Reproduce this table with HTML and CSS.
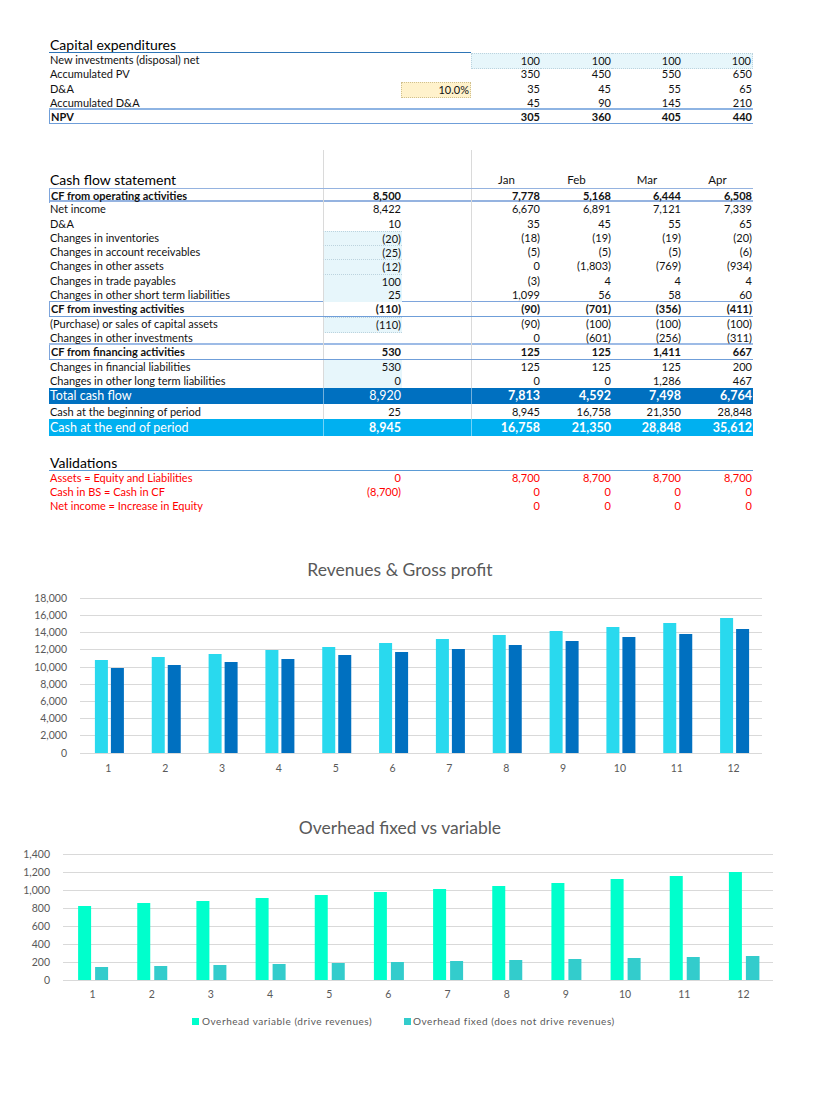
FILE: index.html
```html
<!DOCTYPE html>
<html lang="en">
<head>
<meta charset="utf-8">
<title>Financial model</title>
<link rel="stylesheet" href="styles.css">
</head>
<body>
<div class="page">
  <section class="capex">
    <div class="r trow"><div class="l title uline3">Capital expenditures</div></div>
    <div class="r"><div class="l">New investments (disposal) net</div><div></div><div></div><div class="mi mi-first">100</div><div class="mi">100</div><div class="mi">100</div><div class="mi mi-last">100</div></div>
    <div class="r"><div class="l">Accumulated PV</div><div></div><div></div><div>350</div><div>450</div><div>550</div><div>650</div></div>
    <div class="r"><div class="l">D&amp;A</div><div></div><div class="pct">10.0%</div><div>35</div><div>45</div><div>55</div><div>65</div></div>
    <div class="r accda"><div class="l">Accumulated D&amp;A</div><div></div><div></div><div>45</div><div>90</div><div>145</div><div>210</div></div>
    <div class="r npv bold"><div class="l">NPV</div><div></div><div></div><div>305</div><div>360</div><div>405</div><div>440</div></div>
  </section>

  <section class="cf">
    <div class="r spacer"><div></div><div></div><div></div><div></div><div></div><div></div><div></div></div>
    <div class="r trow"><div class="l title">Cash flow statement</div><div></div><div></div><div class="mh">Jan</div><div class="mh">Feb</div><div class="mh">Mar</div><div class="mh">Apr</div></div>
    <div class="r bold op"><div class="l">CF from operating activities</div><div>8,500</div><div></div><div>7,778</div><div>5,168</div><div>6,444</div><div>6,508</div></div>
    <div class="r"><div class="l">Net income</div><div>8,422</div><div></div><div>6,670</div><div>6,891</div><div>7,121</div><div>7,339</div></div>
    <div class="r"><div class="l">D&amp;A</div><div>10</div><div></div><div>35</div><div>45</div><div>55</div><div>65</div></div>
    <div class="r"><div class="l">Changes in inventories</div><div class="in dot">(20)</div><div></div><div>(18)</div><div>(19)</div><div>(19)</div><div>(20)</div></div>
    <div class="r"><div class="l">Changes in account receivables</div><div class="in dot">(25)</div><div></div><div>(5)</div><div>(5)</div><div>(5)</div><div>(6)</div></div>
    <div class="r"><div class="l">Changes in other assets</div><div class="in dot">(12)</div><div></div><div>0</div><div>(1,803)</div><div>(769)</div><div>(934)</div></div>
    <div class="r"><div class="l">Changes in trade payables</div><div class="in dot dotb">100</div><div></div><div>(3)</div><div>4</div><div>4</div><div>4</div></div>
    <div class="r ostl"><div class="l">Changes in other short term liabilities</div><div class="in">25</div><div></div><div>1,099</div><div>56</div><div>58</div><div>60</div></div>
    <div class="r bold sub"><div class="l">CF from investing activities</div><div>(110)</div><div></div><div>(90)</div><div>(701)</div><div>(356)</div><div>(411)</div></div>
    <div class="r"><div class="l">(Purchase) or sales of capital assets</div><div class="in dot dotb">(110)</div><div></div><div>(90)</div><div>(100)</div><div>(100)</div><div>(100)</div></div>
    <div class="r oi"><div class="l">Changes in other investments</div><div></div><div></div><div>0</div><div>(601)</div><div>(256)</div><div>(311)</div></div>
    <div class="r bold sub"><div class="l">CF from financing activities</div><div>530</div><div></div><div>125</div><div>125</div><div>1,411</div><div>667</div></div>
    <div class="r"><div class="l">Changes in financial liabilities</div><div class="in">530</div><div></div><div>125</div><div>125</div><div>125</div><div>200</div></div>
    <div class="r"><div class="l">Changes in other long term liabilities</div><div class="in">0</div><div></div><div>0</div><div>0</div><div>1,286</div><div>467</div></div>
    <div class="r total"><div class="l">Total cash flow</div><div>8,920</div><div></div><div class="sb">7,813</div><div class="sb">4,592</div><div class="sb">7,498</div><div class="sb">6,764</div></div>
    <div class="r begin"><div class="l">Cash at the beginning of period</div><div>25</div><div></div><div>8,945</div><div>16,758</div><div>21,350</div><div>28,848</div></div>
    <div class="r cashend"><div class="l">Cash at the end of period</div><div>8,945</div><div></div><div>16,758</div><div>21,350</div><div>28,848</div><div>35,612</div></div>
  </section>

  <section class="val">
    <div class="r trow"><div class="l title uline-full">Validations</div></div>
    <div class="r vr"><div class="l">Assets = Equity and Liabilities</div><div>0</div><div></div><div>8,700</div><div>8,700</div><div>8,700</div><div>8,700</div></div>
    <div class="r vr"><div class="l">Cash in BS = Cash in CF</div><div>(8,700)</div><div></div><div>0</div><div>0</div><div>0</div><div>0</div></div>
    <div class="r vr"><div class="l">Net income = Increase in Equity</div><div></div><div></div><div>0</div><div>0</div><div>0</div><div>0</div></div>
  </section>
</div>

<svg class="chart chart1" viewBox="0 555 816 225" width="816" height="225" aria-label="Revenues &amp; Gross profit chart">
  <text class="ctitle" x="400" y="576" text-anchor="middle">Revenues &amp; Gross profit</text>
  <g class="grid">
    <line x1="80" x2="762" y1="598.5" y2="598.5"/>
    <line x1="80" x2="762" y1="615.5" y2="615.5"/>
    <line x1="80" x2="762" y1="632.5" y2="632.5"/>
    <line x1="80" x2="762" y1="649.5" y2="649.5"/>
    <line x1="80" x2="762" y1="667.5" y2="667.5"/>
    <line x1="80" x2="762" y1="684.5" y2="684.5"/>
    <line x1="80" x2="762" y1="701.5" y2="701.5"/>
    <line x1="80" x2="762" y1="718.5" y2="718.5"/>
    <line x1="80" x2="762" y1="735.5" y2="735.5"/>
    <line x1="80" x2="762" y1="753.5" y2="753.5"/>
  </g>
  <g class="ylab" text-anchor="end">
    <text x="67" y="602">18,000</text>
    <text x="67" y="619">16,000</text>
    <text x="67" y="636">14,000</text>
    <text x="67" y="653">12,000</text>
    <text x="67" y="671">10,000</text>
    <text x="67" y="688">8,000</text>
    <text x="67" y="705">6,000</text>
    <text x="67" y="722">4,000</text>
    <text x="67" y="739">2,000</text>
    <text x="67" y="757">0</text>
  </g>
  <g class="rev">
    <rect x="94.9" y="660" width="13" height="93"/>
    <rect x="151.75" y="657" width="13" height="96"/>
    <rect x="208.6" y="654" width="13" height="99"/>
    <rect x="265.4" y="650" width="13" height="103"/>
    <rect x="322.25" y="647" width="13" height="106"/>
    <rect x="379.1" y="643" width="13" height="110"/>
    <rect x="435.9" y="639" width="13" height="114"/>
    <rect x="492.75" y="635" width="13" height="118"/>
    <rect x="549.6" y="631" width="13" height="122"/>
    <rect x="606.4" y="627" width="13" height="126"/>
    <rect x="663.25" y="623" width="13" height="130"/>
    <rect x="720.1" y="618" width="13" height="135"/>
  </g>
  <g class="gp">
    <rect x="110.9" y="668" width="13" height="85"/>
    <rect x="167.75" y="665" width="13" height="88"/>
    <rect x="224.6" y="662" width="13" height="91"/>
    <rect x="281.4" y="659" width="13" height="94"/>
    <rect x="338.25" y="655" width="13" height="98"/>
    <rect x="395.1" y="652" width="13" height="101"/>
    <rect x="451.9" y="649" width="13" height="104"/>
    <rect x="508.75" y="645" width="13" height="108"/>
    <rect x="565.6" y="641" width="13" height="112"/>
    <rect x="622.4" y="637" width="13" height="116"/>
    <rect x="679.25" y="634" width="13" height="119"/>
    <rect x="736.1" y="629" width="13" height="124"/>
  </g>
  <g class="xlab" text-anchor="middle">
    <text x="108.4" y="772">1</text>
    <text x="165.3" y="772">2</text>
    <text x="222.1" y="772">3</text>
    <text x="278.9" y="772">4</text>
    <text x="335.8" y="772">5</text>
    <text x="392.6" y="772">6</text>
    <text x="449.4" y="772">7</text>
    <text x="506.3" y="772">8</text>
    <text x="563.1" y="772">9</text>
    <text x="619.9" y="772">10</text>
    <text x="676.8" y="772">11</text>
    <text x="733.6" y="772">12</text>
  </g>
</svg>

<svg class="chart chart2" viewBox="0 810 816 230" width="816" height="230" aria-label="Overhead fixed vs variable chart">
  <text class="ctitle" x="400" y="834" text-anchor="middle">Overhead fixed vs variable</text>
  <g class="grid">
    <line x1="63" x2="773" y1="854.5" y2="854.5"/>
    <line x1="63" x2="773" y1="872.5" y2="872.5"/>
    <line x1="63" x2="773" y1="890.5" y2="890.5"/>
    <line x1="63" x2="773" y1="908.5" y2="908.5"/>
    <line x1="63" x2="773" y1="926.5" y2="926.5"/>
    <line x1="63" x2="773" y1="944.5" y2="944.5"/>
    <line x1="63" x2="773" y1="962.5" y2="962.5"/>
    <line x1="63" x2="773" y1="980.5" y2="980.5"/>
  </g>
  <g class="ylab" text-anchor="end">
    <text x="50" y="858">1,400</text>
    <text x="50" y="876">1,200</text>
    <text x="50" y="894">1,000</text>
    <text x="50" y="912">800</text>
    <text x="50" y="930">600</text>
    <text x="50" y="948">400</text>
    <text x="50" y="966">200</text>
    <text x="50" y="984">0</text>
  </g>
  <g class="ovar">
    <rect x="78.1" y="906" width="13" height="74"/>
    <rect x="137.25" y="903" width="13" height="77"/>
    <rect x="196.4" y="901" width="13" height="79"/>
    <rect x="255.6" y="898" width="13" height="82"/>
    <rect x="314.75" y="895" width="13" height="85"/>
    <rect x="373.9" y="892" width="13" height="88"/>
    <rect x="433.1" y="889" width="13" height="91"/>
    <rect x="492.25" y="886" width="13" height="94"/>
    <rect x="551.4" y="883" width="13" height="97"/>
    <rect x="610.6" y="879" width="13" height="101"/>
    <rect x="669.75" y="876" width="13" height="104"/>
    <rect x="728.9" y="872" width="13" height="108"/>
  </g>
  <g class="ofix">
    <rect x="95.1" y="967" width="13" height="13"/>
    <rect x="154.25" y="966" width="13" height="14"/>
    <rect x="213.4" y="965" width="13" height="15"/>
    <rect x="272.6" y="964" width="13" height="16"/>
    <rect x="331.75" y="963" width="13" height="17"/>
    <rect x="390.9" y="962" width="13" height="18"/>
    <rect x="450.1" y="961" width="13" height="19"/>
    <rect x="509.25" y="960" width="13" height="20"/>
    <rect x="568.4" y="959" width="13" height="21"/>
    <rect x="627.6" y="958" width="13" height="22"/>
    <rect x="686.75" y="957" width="13" height="23"/>
    <rect x="745.9" y="956" width="13.5" height="24"/>
  </g>
  <g class="xlab" text-anchor="middle">
    <text x="92.6" y="998">1</text>
    <text x="151.8" y="998">2</text>
    <text x="210.9" y="998">3</text>
    <text x="270.1" y="998">4</text>
    <text x="329.3" y="998">5</text>
    <text x="388.4" y="998">6</text>
    <text x="447.6" y="998">7</text>
    <text x="506.8" y="998">8</text>
    <text x="565.9" y="998">9</text>
    <text x="625.1" y="998">10</text>
    <text x="684.3" y="998">11</text>
    <text x="743.4" y="998">12</text>
  </g>
  <g class="legend">
    <rect class="sw-var" x="192" y="1018" width="7" height="7"/>
    <text x="202" y="1025">Overhead variable (drive revenues)</text>
    <rect class="sw-fix" x="404" y="1018" width="7" height="7"/>
    <text x="413" y="1025">Overhead fixed (does not drive revenues)</text>
  </g>
</svg>
</body>
</html>
```

FILE: styles.css
```css
html, body {
  margin: 0;
  padding: 0;
  background: #ffffff;
}

body {
  font-family: Lato, "Liberation Sans", sans-serif;
  font-size: 11px;
  color: #111;
}

.page {
  padding: 37px 0 0 49px;
  width: 704px;
}

.r {
  display: grid;
  grid-template-columns: 274px 79px 69px 70px 71px 70px 71px;
  height: 14.3px;
  line-height: 14px;
  box-sizing: border-box;
}

.r > div {
  text-align: right;
  padding-right: 1px;
  white-space: nowrap;
  box-sizing: border-box;
  overflow: visible;
}

.r > .l {
  text-align: left;
  padding-left: 1px;
  padding-right: 0;
}

.bold { font-weight: 700; }

/* title rows */
.trow {
  height: 16px;
  line-height: 15px;
}

.title {
  font-size: 14px;
  color: #000;
}

.uline3 {
  grid-column: 1 / span 3;
  border-bottom: 1.5px solid #2e75b6;
}

.uline-full {
  grid-column: 1 / span 7;
  border-bottom: 1.5px solid #5b9bd5;
}

/* capex inputs */
.mi {
  background: #e7f6fb;
  border-top: 1px dotted #bcd3de;
  border-bottom: 1px dotted #bcd3de;
}
.mi-first { border-left: 1px dotted #bcd3de; }
.mi-last { border-right: 1px dotted #bcd3de; }

.pct {
  background: #fff2cc;
  border: 1px dotted #d0c08e;
  margin-left: -1px;
}

.accda { border-bottom: 2px solid #8eb4e3; }
.npv {
  border-bottom: 1px solid #6f9ed9;
  height: 14.3px;
}
.npv > .l { border-left: 1px solid #6f9ed9; }

/* cash flow */
.cf { margin-top: 25.5px; }

.spacer { height: 22px; }

.cf .r > div:nth-child(2),
.cf .r > div:nth-child(4) {
  border-left: 1px solid #dadada;
}

.mh {
  text-align: center !important;
  font-size: 11.5px;
  padding-right: 0 !important;
}

.op {
  border-top: 1px solid #95b3e0;
  border-bottom: 2px solid #95b3e0;
}
.op > .l,
.sub > .l { border-left: 1px solid #7ea5dc; }

.ostl { border-bottom: 1px solid #7ea5dc; }
.sub { border-bottom: 1px solid #6f9ed9; }
.oi { border-bottom: 2px solid #9dbbe6; }

.cf .r > .in {
  background: #e7f6fb;
}
.cf .r > .dot {
  border-top: 1px dotted #bcd3de;
  border-left: 1px dotted #bcd3de;
}
.cf .r > .dotb {
  border-bottom: 1px dotted #bcd3de;
}

.total {
  height: 16px;
  line-height: 16px;
  background: #0070c0;
  color: #ffffff;
  font-size: 12.5px;
}
.total .sb { font-weight: 700; }

.begin {
  height: 15px;
  line-height: 15px;
}

.cashend {
  height: 17px;
  line-height: 17px;
  background: #00b0f0;
  color: #ffffff;
  font-size: 12.5px;
  font-weight: 700;
}
.cashend > .l { font-weight: 400; }

.cf .total > div:nth-child(2),
.cf .total > div:nth-child(4),
.cf .cashend > div:nth-child(2),
.cf .cashend > div:nth-child(4) {
  border-left: 1px solid rgba(255, 255, 255, 0.45);
}

/* validations */
.val { margin-top: 18.8px; }
.vr {
  height: 14px;
  color: #ff0000;
}

/* charts */
.chart {
  display: block;
}
.chart1 { margin-top: 42px; }
.chart2 { margin-top: 30px; }

.ctitle {
  font-family: Lato, "Liberation Sans", sans-serif;
  font-size: 17.5px;
  fill: #595959;
}

.grid line {
  stroke: #d9d9d9;
  stroke-width: 1;
}

.ylab text,
.xlab text {
  font-family: Lato, "Liberation Sans", sans-serif;
  font-size: 10.5px;
  fill: #595959;
}

.rev rect { fill: #29d9ee; }
.gp rect { fill: #0070c0; }
.ovar rect { fill: #00ffcc; }
.ofix rect { fill: #33cccc; }

.legend text {
  font-family: Lato, "Liberation Sans", sans-serif;
  font-size: 10px;
  letter-spacing: 0.55px;
  fill: #595959;
}
.sw-var { fill: #00ffcc; }
.sw-fix { fill: #33cccc; }
```
